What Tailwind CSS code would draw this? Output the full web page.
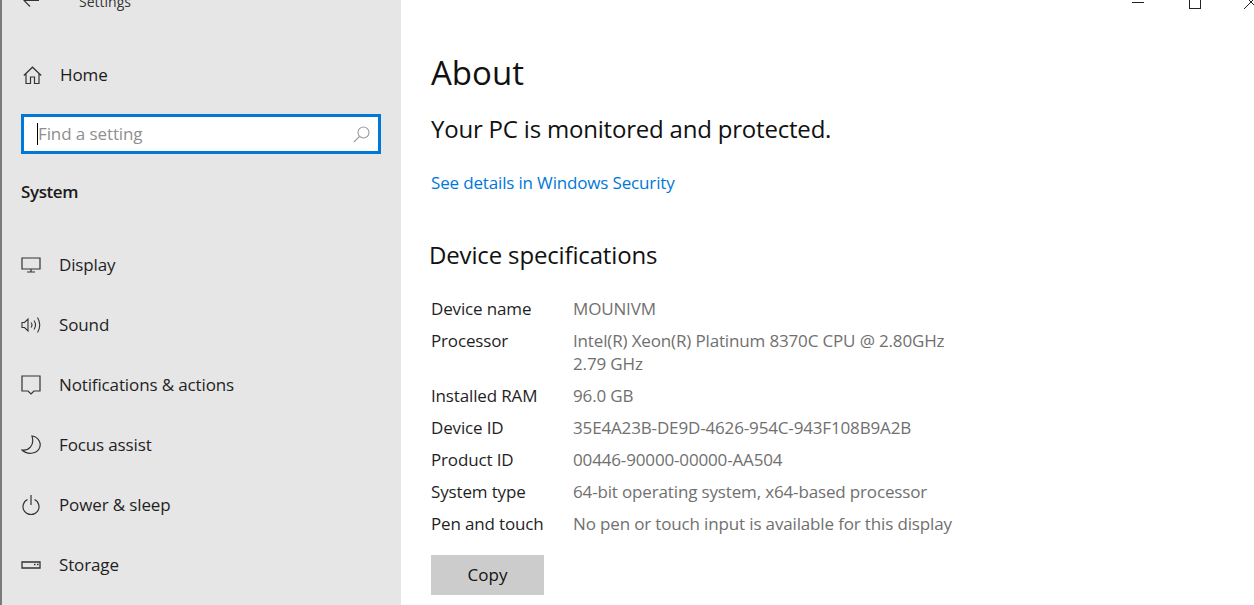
<!DOCTYPE html>
<html lang="en">
<head>
    <meta charset="UTF-8">
    <title>Settings</title>
    <script src="https://cdn.jsdelivr.net/npm/@tailwindcss/browser@4"></script>
</head>
<body class="bg-white text-black font-['Open_Sans',sans-serif]">
    <div class="w-[1254px] h-[605px] flex overflow-hidden relative">
        <!-- Sidebar -->
        <aside class="w-[401px] h-full shrink-0 bg-[#e6e6e6] border-l-2 border-[#7a7a7a] pl-[19px] overflow-hidden">
            <div class="flex items-center h-[11px] text-[#333]">
                <svg class="w-[16px] h-[14px] ml-[2px] -mt-[10px]" viewBox="0 0 16 14" fill="none" stroke="currentColor" stroke-width="1.1"><path d="M1 6.5H16M7 .5L1 6.5L7 12.5"/></svg>
                <span class="ml-[40px] -mt-[7px] text-[14px] leading-[20px]">Settings</span>
            </div>
            <a class="flex items-center h-[24px] mt-[52px] text-[#1a1a1a]">
                <svg class="w-[19px] h-[19px] ml-[2px]" viewBox="0 0 19 19" fill="none" stroke="#333" stroke-width="1.2"><path d="M.8 9.5L9.5 1.2L18.2 9.5M3 7.5V17.5H7.5V11H11.5V17.5H16V7.5"/></svg>
                <span class="ml-[18px] text-[17px] tracking-[-0.1px]">Home</span>
            </a>
            <div class="w-[360px] h-[40px] mt-[27px] border-[3px] border-[#0078d7] bg-white flex items-center pl-[13px] pr-[8px]">
                <span class="w-px h-[22px] bg-black"></span>
                <span class="text-[17px] tracking-[-0.1px] text-[#8f8f8f] flex-1">Find a setting</span>
                <svg class="w-[17px] h-[17px]" viewBox="0 0 17 17" fill="none" stroke="#9a9a9a" stroke-width="1.1"><circle cx="10.5" cy="6.5" r="5.5"/><path d="M6.5 10.5L.8 16.2"/></svg>
            </div>
            <div class="mt-[26px] h-[24px] flex items-center text-[17px] tracking-[-0.4px] font-semibold text-[#1a1a1a]">System</div>

            <nav class="mt-[31px] text-[17px] tracking-[-0.13px] text-[#1f1f1f]">
                <a class="flex items-center h-[60px]">
                    <svg class="w-[20px] h-[16px]" viewBox="0 0 20 16" fill="none" stroke="#333" stroke-width="1.2"><path d="M1 1H19V12H1ZM10 12V15M6 15H14"/></svg>
                    <span class="ml-[18px]">Display</span>
                </a>
                <a class="flex items-center h-[60px]">
                    <svg class="w-[20px] h-[18px]" viewBox="0 0 20 18" fill="none" stroke="#333" stroke-width="1.1"><path d="M1 6.5H3.5L7 3V15L3.5 11.5H1ZM10 6.5Q12 9 10 11.5M13 4.5Q16 9 13 13.5M16.5 1.5Q21 9 16.5 16.5"/></svg>
                    <span class="ml-[18px]">Sound</span>
                </a>
                <a class="flex items-center h-[60px]">
                    <svg class="w-[20px] h-[20px]" viewBox="0 0 20 20" fill="none" stroke="#333" stroke-width="1.2"><path d="M1 1H19V16H13L10 19L7 16H1Z"/></svg>
                    <span class="ml-[18px]">Notifications &amp; actions</span>
                </a>
                <a class="flex items-center h-[60px]">
                    <svg class="w-[20px] h-[20px]" viewBox="0 0 20 20" fill="none" stroke="#333" stroke-width="1.2"><path d="M11 1C18 2 21 9 18 14C15 19 6 20 1 15C7 16 14 11 11 1Z"/></svg>
                    <span class="ml-[18px]">Focus assist</span>
                </a>
                <a class="flex items-center h-[60px]">
                    <svg class="w-[20px] h-[20px]" viewBox="0 0 20 20" fill="none" stroke="#333" stroke-width="1.2"><path d="M6.5 4.5A8 8 0 1 0 13.5 4.5M10 0V10"/></svg>
                    <span class="ml-[18px]">Power &amp; sleep</span>
                </a>
                <a class="flex items-center h-[60px]">
                    <svg class="w-[20px] h-[8px]" viewBox="0 0 20 8" fill="none" stroke="#333" stroke-width="1.3"><path d="M1 1H19V7H1ZM13 3.5H14.5M16 3.5H17.5"/></svg>
                    <span class="ml-[18px]">Storage</span>
                </a>
            </nav>
        </aside>

        <!-- Main -->
        <main class="flex-1 pl-[30px] pt-[49px]">
            <h1 class="text-[33px] leading-[48px] text-[#111]">About</h1>
            <p class="mt-[16px] text-[24px] tracking-[-0.2px] leading-[32px] text-[#111]">Your PC is monitored and protected.</p>
            <a class="block mt-[26px] text-[17px] tracking-[-0.16px] leading-[24px] text-[#0078d7]">See details in Windows Security</a>
            <h2 class="mt-[43px] -ml-[2px] text-[24px] tracking-[-0.15px] leading-[34px] text-[#111]">Device specifications</h2>
            <dl class="mt-[20px] grid grid-cols-[142px_1fr] text-[17px] tracking-[-0.15px] leading-[23px] pt-[5px]">
                <dt class="pb-[9px] text-[#1f1f1f]">Device name</dt><dd class="pb-[9px] text-[#707070]">MOUNIVM</dd>
                <dt class="pb-[9px] text-[#1f1f1f]">Processor</dt><dd class="pb-[9px] text-[#707070]">Intel(R) Xeon(R) Platinum 8370C CPU @ 2.80GHz<br>2.79 GHz</dd>
                <dt class="pb-[9px] text-[#1f1f1f]">Installed RAM</dt><dd class="pb-[9px] text-[#707070]">96.0 GB</dd>
                <dt class="pb-[9px] text-[#1f1f1f]">Device ID</dt><dd class="pb-[9px] text-[#707070]">35E4A23B-DE9D-4626-954C-943F108B9A2B</dd>
                <dt class="pb-[9px] text-[#1f1f1f]">Product ID</dt><dd class="pb-[9px] text-[#707070]">00446-90000-00000-AA504</dd>
                <dt class="pb-[9px] text-[#1f1f1f]">System type</dt><dd class="pb-[9px] text-[#707070]">64-bit operating system, x64-based processor</dd>
                <dt class="pb-[9px] text-[#1f1f1f]">Pen and touch</dt><dd class="pb-[9px] text-[#707070]">No pen or touch input is available for this display</dd>
            </dl>
            <button class="mt-[11px] w-[113px] h-[40px] bg-[#cccccc] text-[17px] text-[#111]">Copy</button>
        </main>

        <!-- Window controls -->
        <div class="absolute top-0 right-0 flex items-start h-[10px] overflow-hidden">
            <span class="w-[12px] h-px bg-[#222] mt-[2px] mr-[45px]"></span>
            <span class="w-[12px] h-[9px] border border-t-0 border-[#222] mr-[43px]"></span>
            <svg class="w-[10px] h-[10px]" viewBox="0 0 10 10" fill="none" stroke="#222"><path d="M0 9L9 0M5 0L14 9"/></svg>
        </div>
    </div>
</body>
</html>
